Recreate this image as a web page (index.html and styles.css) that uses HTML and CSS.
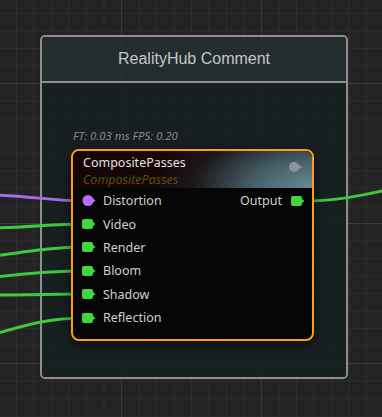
FILE: index.html
```html
<!DOCTYPE html>
<html lang="en">
<head>
  <meta charset="UTF-8">
  <title>RealityHub Comment</title>
  <link rel="stylesheet" href="styles.css">
</head>
<body>
  <div class="canvas">
    <svg class="wires" width="382" height="417" viewBox="0 0 382 417">
      <path class="wire purple" d="M -5 195 C 30 196, 55 201, 86 201" />
      <path class="wire green" d="M -5 228 C 30 227, 55 224, 86 224" />
      <path class="wire green" d="M -5 256 C 30 251, 55 247, 86 247" />
      <path class="wire green" d="M -5 277 C 30 273, 55 271, 86 271" />
      <path class="wire green" d="M -5 295 C 30 295, 55 294, 86 294" />
      <path class="wire green" d="M -5 334 C 35 322, 55 318, 86 318" />
      <path class="wire green" d="M 300 201 C 335 201, 355 197, 387 190" />
    </svg>

    <div class="comment">
      <div class="comment-head">RealityHub Comment</div>
      <div class="comment-body">
        <div class="stats">FT: 0.03 ms FPS: 0.20</div>

        <div class="node">
          <div class="node-head">
            <div class="titles">
              <div class="title">CompositePasses</div>
              <div class="subtitle">CompositePasses</div>
            </div>
            <svg class="toggle" width="14" height="10" viewBox="0 0 14 10">
              <circle cx="5" cy="5" r="5" />
              <path d="M 9.5 2.5 L 13 5 L 9.5 7.5 Z" />
            </svg>
          </div>

          <div class="node-body">
            <div class="row">
              <div class="pin">
                <svg class="port" width="14" height="11" viewBox="0 0 14 11">
                  <circle cx="6" cy="5.5" r="5.5" fill="#b66ff0" />
                  <path d="M 10.5 3 L 13.5 5.5 L 10.5 8 Z" fill="#b66ff0" />
                </svg>
                <span>Distortion</span>
              </div>
              <div class="pin out">
                <span>Output</span>
                <svg class="port" width="14" height="10" viewBox="0 0 14 10">
                  <rect x="0" y="0" width="11" height="10" rx="2" fill="#3fd63f" />
                  <path d="M 10.5 2.5 L 13.5 5 L 10.5 7.5 Z" fill="#3fd63f" />
                </svg>
              </div>
            </div>
            <div class="row">
              <div class="pin">
                <svg class="port" width="14" height="10" viewBox="0 0 14 10">
                  <rect x="0" y="0" width="11" height="10" rx="2" fill="#3fd63f" />
                  <path d="M 10.5 2.5 L 13.5 5 L 10.5 7.5 Z" fill="#3fd63f" />
                </svg>
                <span>Video</span>
              </div>
            </div>
            <div class="row">
              <div class="pin">
                <svg class="port" width="14" height="10" viewBox="0 0 14 10">
                  <rect x="0" y="0" width="11" height="10" rx="2" fill="#3fd63f" />
                  <path d="M 10.5 2.5 L 13.5 5 L 10.5 7.5 Z" fill="#3fd63f" />
                </svg>
                <span>Render</span>
              </div>
            </div>
            <div class="row">
              <div class="pin">
                <svg class="port" width="14" height="10" viewBox="0 0 14 10">
                  <rect x="0" y="0" width="11" height="10" rx="2" fill="#3fd63f" />
                  <path d="M 10.5 2.5 L 13.5 5 L 10.5 7.5 Z" fill="#3fd63f" />
                </svg>
                <span>Bloom</span>
              </div>
            </div>
            <div class="row">
              <div class="pin">
                <svg class="port" width="14" height="10" viewBox="0 0 14 10">
                  <rect x="0" y="0" width="11" height="10" rx="2" fill="#3fd63f" />
                  <path d="M 10.5 2.5 L 13.5 5 L 10.5 7.5 Z" fill="#3fd63f" />
                </svg>
                <span>Shadow</span>
              </div>
            </div>
            <div class="row">
              <div class="pin">
                <svg class="port" width="14" height="10" viewBox="0 0 14 10">
                  <rect x="0" y="0" width="11" height="10" rx="2" fill="#3fd63f" />
                  <path d="M 10.5 2.5 L 13.5 5 L 10.5 7.5 Z" fill="#3fd63f" />
                </svg>
                <span>Reflection</span>
              </div>
            </div>
          </div>
        </div>
      </div>
    </div>
  </div>
</body>
</html>
```

FILE: styles.css
```css
body {
  margin: 0;
  background-color: #232323;
  font-family: "Noto Sans", sans-serif;
}

.canvas {
  position: relative;
  width: 382px;
  height: 417px;
  overflow: hidden;
  background-color: #232323;
  background-image:
    linear-gradient(to right, #3b3b3b 1px, transparent 1px),
    linear-gradient(to bottom, #3b3b3b 1px, transparent 1px),
    linear-gradient(to right, #2d2d2d 1px, transparent 1px),
    linear-gradient(to bottom, #2d2d2d 1px, transparent 1px);
  background-size: 140px 140px, 140px 140px, 17.5px 17.5px, 17.5px 17.5px;
  background-position: 121px 0, 0 83px, 16px 0, 0 13px;
}

.wires {
  position: absolute;
  left: 0;
  top: 0;
  z-index: 1;
}

.wire {
  fill: none;
  stroke-width: 3;
}

.wire.green {
  stroke: #3fc83f;
}

.wire.purple {
  stroke: #a86ce6;
}

/* comment frame */
.comment {
  position: absolute;
  left: 40px;
  top: 35px;
  width: 308px;
  height: 344px;
  box-sizing: border-box;
  border: 2px solid #8e8e8e;
  border-radius: 5px;
  display: flex;
  flex-direction: column;
  overflow: hidden;
}

.comment-head {
  flex-shrink: 0;
  height: 46px;
  box-sizing: border-box;
  border-bottom: 2px solid #8e8e8e;
  background-color: rgba(36, 48, 52, 0.75);
  color: #c6c6c6;
  font-family: "Liberation Sans", Arial, sans-serif;
  font-size: 16px;
  display: flex;
  align-items: center;
  justify-content: center;
}

.comment-body {
  flex: 1;
  background-color: rgba(20, 30, 32, 0.8);
  padding: 46px 0 0 29px;
}

.stats {
  height: 14px;
  line-height: 14px;
  margin: 0 0 6px 2px;
  font-size: 11.4px;
  font-style: italic;
  color: #8a8a8a;
}

/* node */
.node {
  position: relative;
  z-index: 2;
  width: 243px;
  height: 192px;
  box-sizing: border-box;
  border: 2px solid #ff9e0b;
  border-radius: 8px;
  background-color: #060606;
  overflow: hidden;
  box-shadow: 0 4px 14px rgba(0, 0, 0, 0.55);
}

.node-head {
  height: 37px;
  box-sizing: border-box;
  padding: 3px 9px 0 10px;
  display: flex;
  justify-content: space-between;
  background:
    radial-gradient(ellipse 160px 75px at 100% 100%, #678a95 0%, #48626b 35%, rgba(30, 34, 38, 0.6) 75%, rgba(20, 6, 6, 0) 100%),
    linear-gradient(to right, #140404 0%, #170707 55%, #1d1c20 100%);
}

.title {
  font-size: 12.5px;
  line-height: 17px;
  color: #e2e2e2;
}

.subtitle {
  font-size: 12.5px;
  line-height: 17px;
  font-style: italic;
  color: #5a5012;
}

.toggle {
  margin-top: 8px;
  fill: #8e9598;
}

.node-body {
  padding-top: 1px;
}

.row {
  height: 23.4px;
  display: flex;
  align-items: center;
  justify-content: space-between;
  padding: 0 7px 0 9px;
}

.pin {
  display: flex;
  align-items: center;
  gap: 7px;
  font-size: 12.5px;
  color: #d0d0d0;
}

.pin.out {
  gap: 9px;
}

.port {
  display: block;
}
```
